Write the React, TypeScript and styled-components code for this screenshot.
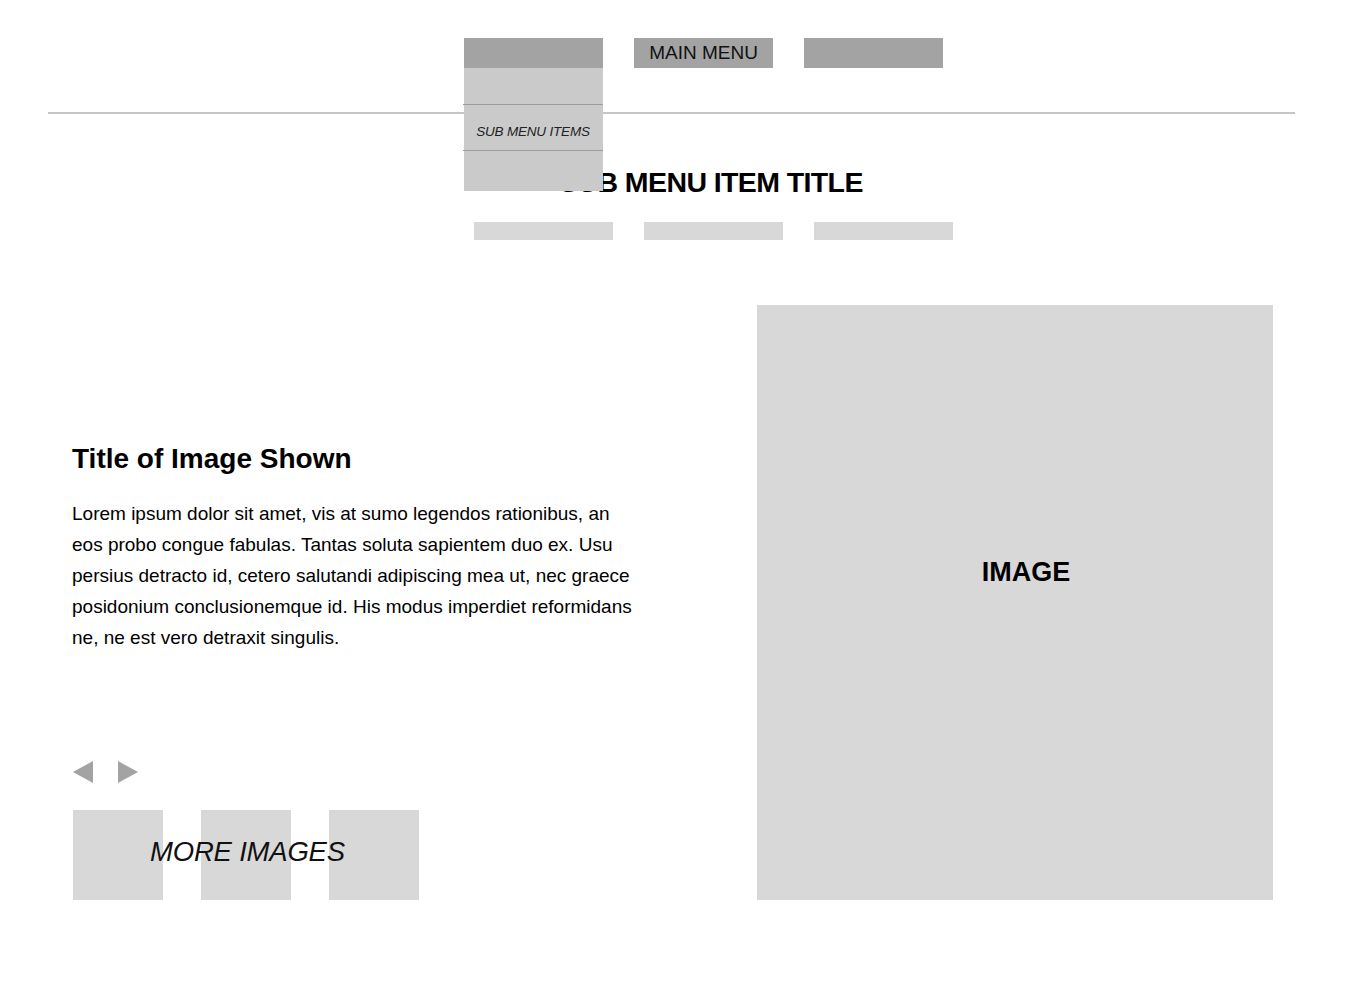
import React from 'react';
import styled, { createGlobalStyle } from 'styled-components';

const GlobalStyle = createGlobalStyle`
  body {
    margin: 0;
    background: #ffffff;
    font-family: "Liberation Sans", Arial, sans-serif;
    color: #000;
  }
`;

const Page = styled.div`
  width: 1366px;
  height: 1000px;
  position: relative;
  overflow: hidden;
`;

const Nav = styled.nav`
  display: flex;
  gap: 31px;
  margin: 38px 0 0 464px;
`;

const NavItem = styled.div`
  position: relative;
  width: 139px;
  height: 30px;
  background: #a3a3a3;
  display: flex;
  align-items: center;
  justify-content: center;
  font-size: 19px;
  color: #111;
  z-index: 2;
`;

const Dropdown = styled.ul`
  position: absolute;
  top: 30px;
  left: 0;
  width: 139px;
  margin: 0;
  padding: 0;
  list-style: none;
  background: #cacaca;
`;

const DropItem = styled.li<{ $h: number; $divider?: boolean }>`
  height: ${(p) => p.$h}px;
  box-sizing: border-box;
  display: flex;
  align-items: center;
  justify-content: center;
  padding-top: ${(p) => (p.$divider ? '8px' : '0')};
  font-size: 13.5px;
  font-style: italic;
  color: #222;
  letter-spacing: -0.2px;
  border-top: ${(p) => (p.$divider ? '1px solid #9c9c9c' : 'none')};
  margin-left: ${(p) => (p.$divider ? '-1px' : '0')};
`;

const Rule = styled.hr`
  margin: 44px 71px 0 48px;
  border: none;
  border-top: 2px solid #c6c6c6;
`;

const SubTitle = styled.h2`
  margin: 53px 0 0;
  padding-left: 56px;
  text-align: center;
  font-size: 28.5px;
  letter-spacing: -0.6px;
  line-height: 30px;
  font-weight: bold;
`;

const SubBars = styled.div`
  display: flex;
  gap: 31px;
  margin: 25px 0 0 474px;
`;

const SubBar = styled.div`
  width: 139px;
  height: 18px;
  background: #d8d8d8;
`;

const Main = styled.main`
  display: grid;
  grid-template-columns: 1fr 516px;
  margin-top: 65px;
  padding: 0 93px 0 72px;
`;

const Info = styled.section`
  display: flex;
  flex-direction: column;
  padding-top: 138px;
`;

const Title = styled.h1`
  margin: 0;
  font-size: 28px;
  line-height: 32px;
  font-weight: bold;
`;

const Body = styled.p`
  margin: 23px 0 0;
  max-width: 566px;
  font-size: 19px;
  line-height: 31px;
`;

const Arrows = styled.div`
  display: flex;
  gap: 25px;
  margin-top: auto;
  padding-left: 1px;
`;

const Thumbs = styled.div`
  position: relative;
  display: flex;
  gap: 38px;
  margin-top: 27px;
  padding-left: 1px;
`;

const Thumb = styled.div`
  width: 90px;
  height: 90px;
  background: #d8d8d8;
`;

const MoreLabel = styled.span`
  position: absolute;
  left: 78px;
  top: -3px;
  height: 90px;
  display: flex;
  align-items: center;
  font-size: 27.5px;
  font-style: italic;
  color: #111;
  letter-spacing: -0.2px;
`;

const ImageBox = styled.div`
  height: 595px;
  background: #d8d8d8;
  display: flex;
  align-items: center;
  justify-content: center;
  padding: 0 0 60px 22px;
  box-sizing: border-box;
  font-size: 27px;
  font-weight: bold;
`;

const Arrow: React.FC<{ dir: 'left' | 'right' }> = ({ dir }) => (
  <svg width="20" height="22" viewBox="0 0 20 22">
    <polygon points={dir === 'left' ? '20,0 20,22 0,11' : '0,0 0,22 20,11'} fill="#a3a3a3" />
  </svg>
);

const App: React.FC = () => {
  return (
    <Page>
      <GlobalStyle />
      <Nav>
        <NavItem>
          <Dropdown>
            <DropItem $h={36} />
            <DropItem $h={46} $divider>
              SUB MENU ITEMS
            </DropItem>
            <DropItem $h={41} $divider />
          </Dropdown>
        </NavItem>
        <NavItem>MAIN MENU</NavItem>
        <NavItem />
      </Nav>
      <Rule />
      <SubTitle>SUB MENU ITEM TITLE</SubTitle>
      <SubBars>
        <SubBar />
        <SubBar />
        <SubBar />
      </SubBars>
      <Main>
        <Info>
          <Title>Title of Image Shown</Title>
          <Body>
            Lorem ipsum dolor sit amet, vis at sumo legendos rationibus, an eos probo congue fabulas.
            Tantas soluta sapientem duo ex. Usu persius detracto id, cetero salutandi adipiscing mea
            ut, nec graece posidonium conclusionemque id. His modus imperdiet reformidans ne, ne est
            vero detraxit singulis.
          </Body>
          <Arrows>
            <Arrow dir="left" />
            <Arrow dir="right" />
          </Arrows>
          <Thumbs>
            <Thumb />
            <Thumb />
            <Thumb />
            <MoreLabel>MORE IMAGES</MoreLabel>
          </Thumbs>
        </Info>
        <ImageBox>IMAGE</ImageBox>
      </Main>
    </Page>
  );
};

export default App;
